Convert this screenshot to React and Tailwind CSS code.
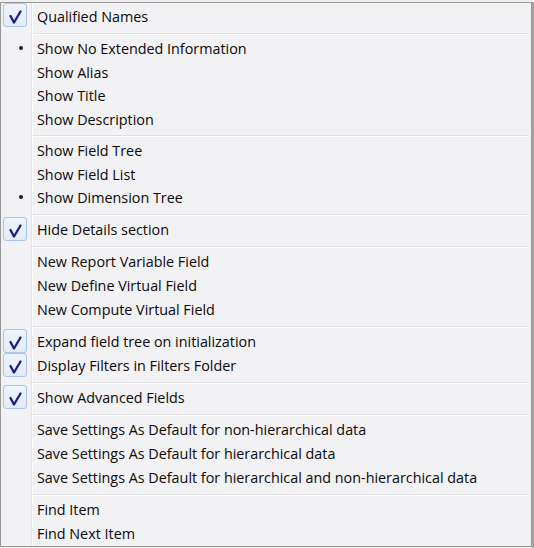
import React from "react";

const groups = [
  { rows: [{ label: "Qualified Names", mark: "check", h: "h-[25px]", first: true }] },
  {
    rows: [
      { label: "Show No Extended Information", mark: "bullet", h: "h-[23.5px]" },
      { label: "Show Alias", h: "h-[23.5px]" },
      { label: "Show Title", h: "h-[23.5px]" },
      { label: "Show Description", h: "h-[23.5px]" },
    ],
  },
  {
    rows: [
      { label: "Show Field Tree", h: "h-[23.5px]" },
      { label: "Show Field List", h: "h-[23.5px]" },
      { label: "Show Dimension Tree", mark: "bullet", h: "h-[23.5px]" },
    ],
  },
  { rows: [{ label: "Hide Details section", mark: "check" }] },
  {
    rows: [
      { label: "New Report Variable Field" },
      { label: "New Define Virtual Field" },
      { label: "New Compute Virtual Field" },
    ],
  },
  {
    rows: [
      { label: "Expand field tree on initialization", mark: "check" },
      { label: "Display Filters in Filters Folder", mark: "check" },
    ],
  },
  { rows: [{ label: "Show Advanced Fields", mark: "check" }] },
  {
    rows: [
      { label: "Save Settings As Default for non-hierarchical data" },
      { label: "Save Settings As Default for hierarchical data" },
      { label: "Save Settings As Default for hierarchical and non-hierarchical data" },
    ],
  },
  { rows: [{ label: "Find Item" }, { label: "Find Next Item" }] },
];

function CheckBox() {
  return (
    <div className="w-[24px] h-[24px] rounded-[3px] border border-[#a9c5ec] bg-gradient-to-b from-[#eef4fc] to-[#e2ebf8] flex items-center justify-center">
      <svg width="22" height="22" viewBox="0 0 22 22">
        <path
          d="M6.5 12 L10 18.5 L16.5 7.5"
          fill="none"
          stroke="#1c1c86"
          strokeWidth="2.3"
          strokeLinecap="round"
          strokeLinejoin="round"
        />
      </svg>
    </div>
  );
}

function Row({ label, mark, h = "h-[24px]", first }) {
  return (
    <div className={`flex ${h}`}>
      <div
        className={`w-[31px] shrink-0 border-r border-[#e2e3e3] flex ${
          first ? "items-start" : "items-center"
        } ${mark === "bullet" ? "pl-[18px]" : "pl-[2px]"}`}
      >
        {mark === "check" && <CheckBox />}
        {mark === "bullet" && (
          <div className="w-[4px] h-[4px] rounded-full bg-[#1a1a1a]" />
        )}
      </div>
      <div className="flex-1 border-l border-white flex items-center pl-[4px] pt-[2px] text-[#0a0a0a] whitespace-nowrap">
        {label}
      </div>
    </div>
  );
}

function Separator() {
  return (
    <div className="flex h-[8px]">
      <div className="w-[31px] shrink-0 border-r border-[#e2e3e3]" />
      <div className="flex-1 border-l border-white pt-[5px] pr-[2px]">
        <div className="h-[1px] bg-[#e0dfe1]" />
        <div className="h-[1px] bg-white" />
      </div>
    </div>
  );
}

export default function App() {
  return (
    <div
      className="w-[534px] h-[548px] bg-[#efefef] flex pt-[2px] overflow-hidden"
      style={{ fontFamily: '"Segoe UI", "Open Sans", "Noto Sans", sans-serif' }}
    >
      <div className="w-[532px] h-[545px] border border-[#979797] bg-[#f2f1f3] flex flex-col text-[14.35px]">
        {groups.map((g, gi) => (
          <React.Fragment key={gi}>
            {gi > 0 && <Separator />}
            {g.rows.map((r) => (
              <Row key={r.label} {...r} />
            ))}
          </React.Fragment>
        ))}
        <div className="flex flex-1">
          <div className="w-[31px] shrink-0 border-r border-[#e2e3e3]" />
          <div className="flex-1 border-l border-white" />
        </div>
      </div>
      <div className="w-[2px] h-full bg-[#a3a3a3]" />
    </div>
  );
}
